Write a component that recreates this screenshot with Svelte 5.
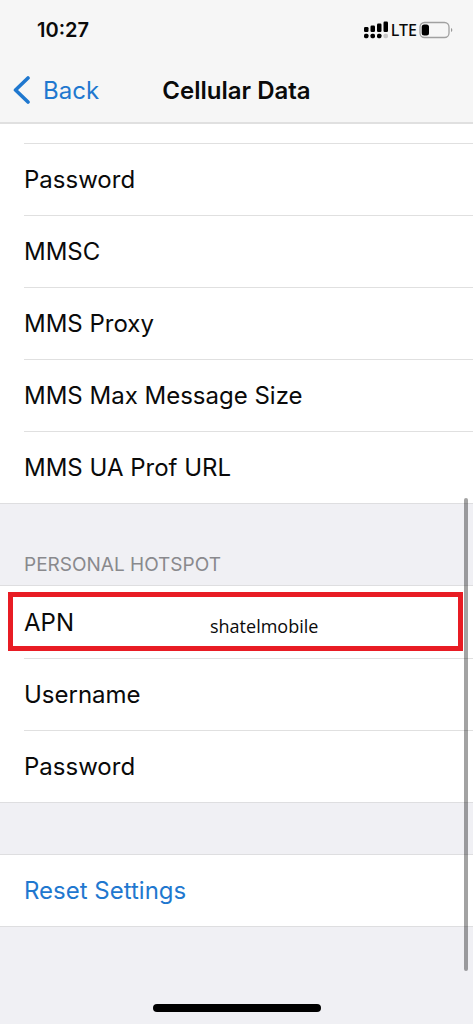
<script lang="ts">
    type Field = { id: string; label: string; value: string; marked?: boolean };

    let mms: Field[] = $state([
        { id: "mms-password", label: "Password", value: "" },
        { id: "mmsc", label: "MMSC", value: "" },
        { id: "mms-proxy", label: "MMS Proxy", value: "" },
        { id: "mms-size", label: "MMS Max Message Size", value: "" },
        { id: "mms-ua", label: "MMS UA Prof URL", value: "" },
    ]);

    let hotspot: Field[] = $state([
        { id: "apn", label: "APN", value: "shatelmobile", marked: true },
        { id: "username", label: "Username", value: "" },
        { id: "password", label: "Password", value: "" },
    ]);

    function reset() {
        for (const field of [...mms, ...hotspot]) field.value = "";
    }
</script>

{#snippet row(field: Field)}
    <div class="row" class:marked={field.marked}>
        <label for={field.id}>{field.label}</label>
        <input id={field.id} type="text" autocomplete="off" bind:value={field.value} />
    </div>
{/snippet}

<div class="screen">
    <header>
        <div class="status">
            <time>10:27</time>
            <div class="indicators">
                <!-- dual sim signal: bars on top, dots below -->
                <svg width="25" height="18" viewBox="0 0 25 18">
                    <rect x="0" y="6" width="4.5" height="5" rx="1.2" />
                    <rect x="6.5" y="4.5" width="4.5" height="6.5" rx="1.2" />
                    <rect x="13" y="2.5" width="4.5" height="8.5" rx="1.2" />
                    <rect x="19.5" y="0.5" width="4.5" height="10.5" rx="1.2" />
                    <rect x="0" y="12.7" width="4.5" height="4.5" rx="1.6" />
                    <rect x="6.5" y="12.7" width="4.5" height="4.5" rx="1.6" />
                    <rect x="13" y="12.7" width="4.5" height="4.5" rx="1.6" />
                    <rect x="19.5" y="12.7" width="4.5" height="4.5" rx="1.6" fill="#c8c8c8" />
                </svg>
                <span>LTE</span>
                <svg width="34" height="18" viewBox="0 0 34 18">
                    <rect x="1" y="1.5" width="29" height="15" rx="4.5" fill="none" stroke="#a0a0a0" stroke-width="1.3" />
                    <rect x="2.7" y="3.5" width="7.3" height="11" rx="2.5" />
                    <path d="M32 7c1.8.7 1.8 3.3 0 4z" fill="#999" />
                </svg>
            </div>
        </div>
        <nav>
            <a class="back" href="#back">
                <svg width="18" height="28" viewBox="0 0 18 28">
                    <path d="M16 2 3.5 14 16 26" fill="none" stroke="currentColor" stroke-width="3.6" stroke-linecap="round" stroke-linejoin="round" />
                </svg>
                Back
            </a>
            <h1>Cellular Data</h1>
        </nav>
    </header>

    <main>
        <section class="group first">
            {#each mms as field (field.id)}
                {@render row(field)}
            {/each}
        </section>

        <h2>Personal Hotspot</h2>
        <section class="group">
            {#each hotspot as field (field.id)}
                {@render row(field)}
            {/each}
        </section>

        <section class="group actions">
            <button type="button" onclick={reset}>Reset Settings</button>
        </section>
    </main>

    <div class="home"></div>
    <div class="scrollbar"></div>
</div>

<style>
    :global(body) {
        background: #fff;
        font-family: Inter, "Liberation Sans", sans-serif;
    }

    .screen {
        position: relative;
        display: flex;
        flex-direction: column;
        min-height: 100vh;
        margin-right: 3px;
        background: #f0f0f4;
        color: #0a0a0a;
    }

    header {
        background: #f6f6f6;
        border-bottom: 2px solid #e0e0e0;
    }

    .status {
        display: flex;
        align-items: center;
        justify-content: space-between;
        height: 60px;
        padding: 0 20px 0 37px;
    }

    time {
        font-size: 20px;
        font-weight: 600;
    }

    .indicators {
        display: flex;
        align-items: center;
        gap: 2px;

        span {
            font-family: "Noto Sans", sans-serif;
            font-size: 16px;
            font-weight: 500;
            line-height: 18px;
        }
    }

    nav {
        display: grid;
        grid-template-columns: 1fr auto 1fr;
        align-items: center;
        height: 60px;
        padding: 0 12px 2px;
    }

    .back {
        display: flex;
        align-items: center;
        gap: 13px;
        color: #1f78cf;
        font-size: 24px;
        text-decoration: none;
    }

    h1 {
        margin: 0;
        font-size: 24px;
        font-weight: 600;
    }

    h2 {
        margin: 0;
        padding: 49px 24px 8px;
        color: #89898d;
        font-size: 19px;
        font-weight: 400;
        line-height: 24px;
        text-transform: uppercase;
    }

    .group {
        background: #fff;
        border-top: 1px solid #dedee0;
        border-bottom: 1px solid #dedee0;

        &.first {
            border-top: none;
            padding-top: 19px;
        }

        &.first .row:first-child {
            border-top: 1px solid #e0e0e0;
        }

        &.actions {
            margin-top: 51px;
        }
    }

    .row {
        position: relative;
        display: flex;
        align-items: center;
        gap: 16px;
        box-sizing: border-box;
        height: 72px;
        margin-left: 24px;
        font-size: 24px;

        & + .row {
            border-top: 1px solid #e0e0e0;
        }

        label {
            min-width: 170px;
            white-space: nowrap;
        }

        input {
            flex: 1;
            min-width: 0;
            padding: 8px 0 0;
            border: none;
            outline: none;
            background: none;
            color: inherit;
            font-family: "Open Sans", sans-serif;
            font-size: 18px;
        }

        &.marked::after {
            content: "";
            position: absolute;
            inset: 6px 10px 7px -16px;
            border: 5px solid #e81c24;
            pointer-events: none;
        }
    }

    button {
        display: block;
        width: 100%;
        height: 71px;
        padding: 0 24px;
        border: none;
        background: none;
        color: #1f78cf;
        font-family: inherit;
        font-size: 24px;
        text-align: left;
        cursor: pointer;
    }

    .home {
        width: 168px;
        height: 8px;
        margin: auto auto 12px;
        border-radius: 4px;
        background: #000;
    }

    .scrollbar {
        position: absolute;
        right: 5px;
        bottom: 53px;
        width: 4px;
        height: 473px;
        border-radius: 2px;
        background: rgba(0, 0, 0, 0.36);
    }
</style>
